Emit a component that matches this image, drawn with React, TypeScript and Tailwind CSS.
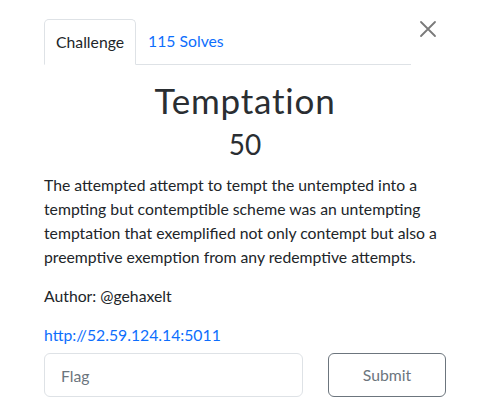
export default function App() {
  return (
    <div
      className="relative w-[488px] h-[415px] bg-white text-[#212529]"
      style={{ fontFamily: "Lato, 'Open Sans', sans-serif" }}
    >
      {/* close */}
      <button className="absolute left-[418px] top-[19px] w-5 h-5 flex items-center justify-center">
        <svg width="18" height="18" viewBox="0 0 18 18" fill="none" stroke="#7a7a7a" strokeWidth="1.8" strokeLinecap="round">
          <path d="M2 2 L16 16 M16 2 L2 16" />
        </svg>
      </button>

      <div className="pl-[44px] pr-[42px] pt-[19px] text-[15.75px]">
        {/* tabs */}
        <div className="flex w-[367px] border-b border-[#dee2e6] leading-6">
          <div className="px-[11px] py-[10px] border border-[#dee2e6] border-b-white rounded-t-[5px] -mb-px bg-white">
            Challenge
          </div>
          <div className="px-3 py-[10px] text-[#0d6efd]">115 Solves</div>
        </div>

        <h2 className="mt-[14px] text-center text-[35px] leading-[43px] font-normal tracking-[0.8px] text-[#2a2e32]">
          Temptation
        </h2>
        <h4 className="mt-[5px] text-center text-[28px] leading-[34px] font-normal text-[#2a2e32]">50</h4>

        <p className="mt-[12px] leading-6">
          The attempted attempt to tempt the untempted into a tempting but contemptible scheme was an untempting
          temptation that exemplified not only contempt but also a preemptive exemption from any redemptive attempts.
        </p>
        <p className="mt-[15px] leading-6">Author: @gehaxelt</p>
        <p className="mt-[15px] leading-6">
          <a className="text-[#0d6efd]">http://52.59.124.14:5011</a>
        </p>

        <div className="mt-[6px] flex gap-[25px]">
          <input
            placeholder="Flag"
            className="w-[259px] h-[44px] px-4 rounded-[6px] border border-[#dee2e6] placeholder-[#6c757d] outline-none"
          />
          <button className="w-[118px] h-[44px] rounded-[6px] border border-[#6c757d] text-[#6c757d]">
            Submit
          </button>
        </div>
      </div>
    </div>
  );
}
